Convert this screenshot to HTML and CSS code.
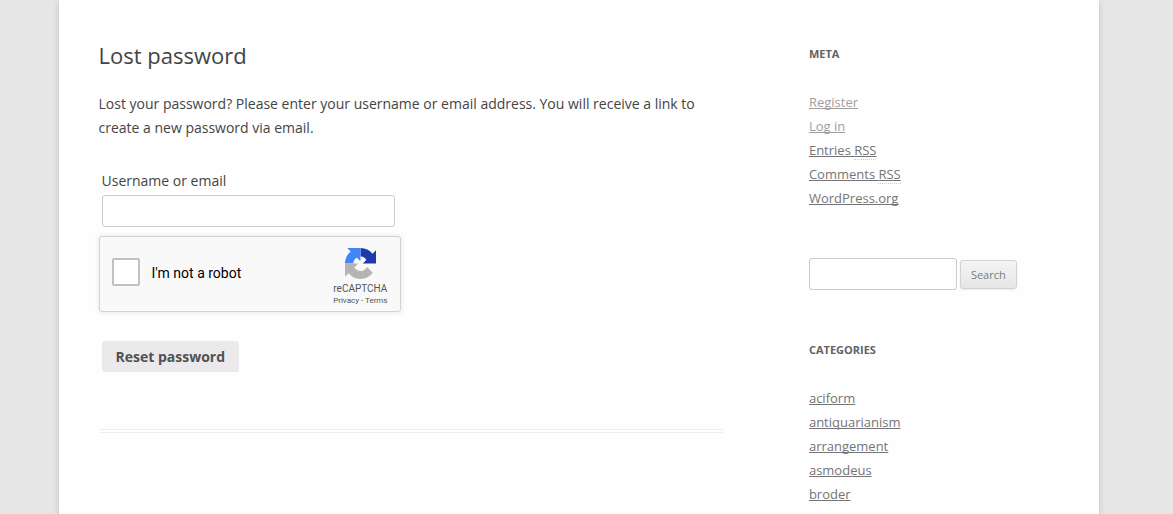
FILE: index.html
```html
<!DOCTYPE html>
<html lang="en">
<head>
<meta charset="utf-8">
<title>Lost password</title>
<link rel="stylesheet" href="styles.css">
</head>
<body>
<div class="site">
  <main class="content">
    <article class="entry">
      <h1 class="entry-title">Lost password</h1>
      <p class="intro">Lost your password? Please enter your username or email address. You will receive a link to create a new password via email.</p>
      <form class="reset-form">
        <div class="field">
          <label for="user-login">Username or email</label>
          <input class="text-input" id="user-login" type="text">
        </div>
        <div class="captcha">
          <input class="captcha-box" id="robot" type="checkbox">
          <label class="captcha-label" for="robot">I'm not a robot</label>
          <div class="captcha-brand">
            <svg class="captcha-logo" viewBox="0 0 64 64" aria-hidden="true">
              <path fill="#1c3aa9" d="M64 31.955l-.016-1.37V4.687l-7.16 7.16C50.964 4.674 42.033.093 32.05.093V17.5c1.8 0 3.7.1 5.3.9 3.2 1.4 5.2 3.5 6.6 6.3l-7.3 7.255H64"/>
              <path fill="#4285f4" d="M31.862.094l-1.37.016H4.594l7.16 7.16C4.58 13.131 0 22.061 0 32.045h17.2c.1-1.9.2-3.7 1-5.3 1.4-3.2 3.5-5.2 6.3-6.6l7.362 7.3V.094"/>
              <path fill="#b4b4b4" d="M.001 32.045l.016 1.37v25.898l7.16-7.16C13.037 59.326 21.968 63.907 31.95 63.907c10.388 0 19.617-4.96 25.45-12.64L45.669 39.408a15.54 15.54 0 0 1-4.754 5.334c-2.05 1.6-4.955 2.909-8.965 2.909-.484 0-.858-.057-1.133-.163-4.968-.392-9.275-3.134-11.811-7.114l8.304-8.304L.001 32.045"/>
            </svg>
            <span class="captcha-name">reCAPTCHA</span>
            <span class="captcha-links"><a href="#privacy">Privacy</a> - <a href="#terms">Terms</a></span>
          </div>
        </div>
        <button class="reset-button" type="submit">Reset password</button>
      </form>
    </article>
  </main>
  <aside class="sidebar">
    <section class="widget">
      <h2 class="widget-title">Meta</h2>
      <ul class="links">
        <li><a class="muted" href="#register">Register</a></li>
        <li><a class="muted" href="#login">Log in</a></li>
        <li><a href="#entries">Entries <abbr>RSS</abbr></a></li>
        <li><a href="#comments">Comments <abbr>RSS</abbr></a></li>
        <li><a href="#wordpress">WordPress.org</a></li>
      </ul>
    </section>
    <form class="widget search">
      <input class="text-input" type="text" aria-label="Search for">
      <button class="search-button" type="submit">Search</button>
    </form>
    <section class="widget">
      <h2 class="widget-title">Categories</h2>
      <ul class="links">
        <li><a href="#aciform">aciform</a></li>
        <li><a href="#antiquarianism">antiquarianism</a></li>
        <li><a href="#arrangement">arrangement</a></li>
        <li><a href="#asmodeus">asmodeus</a></li>
        <li><a href="#broder">broder</a></li>
      </ul>
    </section>
  </aside>
</div>
</body>
</html>
```
FILE: styles.css
```css
* {
  box-sizing: border-box;
}

body {
  margin: 0;
  padding: 0 16px 0 0;
  background: #e6e6e6;
  color: #444;
  font: 14px/24px "Open Sans", Helvetica, Arial, sans-serif;
}

.site {
  display: flex;
  justify-content: space-between;
  max-width: 1040px;
  min-height: 100vh;
  margin: 0 auto;
  padding: 0 40px;
  background: #fefefe;
  box-shadow: 0 2px 6px rgba(100, 100, 100, 0.3);
}

.content {
  width: 65%;
  padding-top: 42px;
}

.entry {
  padding-bottom: 57px;
  border-bottom: 4px double #ededed;
}

.entry-title {
  margin: 0 0 23px;
  font-size: 22px;
  font-weight: 400;
  line-height: 27px;
}

.intro {
  margin: 0 0 29px;
}

.field {
  display: flex;
  flex-direction: column;
  align-items: flex-start;
  gap: 2px;
  margin: 0 3px 9px;
}

.text-input {
  height: 32px;
  padding: 6px;
  border: 1px solid #ccc;
  border-radius: 3px;
  background: #fefefe;
  font: inherit;
}

.field .text-input {
  width: 293px;
  max-width: 100%;
}

.captcha {
  display: flex;
  align-items: center;
  width: 302px;
  max-width: 100%;
  height: 76px;
  padding: 0 12px;
  border: 1px solid #d3d3d3;
  border-radius: 3px;
  background: #f9f9f9;
  box-shadow: 0 0 4px 1px rgba(0, 0, 0, 0.08);
  color: #000;
  font-family: Roboto, Arial, sans-serif;
}

.captcha-box {
  appearance: none;
  width: 28px;
  height: 28px;
  margin: 0 12px 4px 0;
  border: 2px solid #c1c1c1;
  border-radius: 2px;
  background: #fff;
}

.captcha-label {
  flex: 1;
  padding-bottom: 2px;
}

.captcha-brand {
  display: flex;
  flex-direction: column;
  align-items: center;
  padding-top: 7px;
  color: #555;
}

.captcha-logo {
  width: 31px;
  height: 31px;
  margin-bottom: 4px;
}

.captcha-name {
  font-size: 10px;
  line-height: 12px;
}

.captcha-links {
  font-size: 8px;
  line-height: 12px;
}

.captcha-links a {
  color: inherit;
  text-decoration: none;
}

.reset-button {
  height: 31px;
  margin: 29px 3px 0;
  padding: 0 14px;
  border: 0;
  border-radius: 3px;
  background: #ebe9eb;
  color: #515151;
  font: 700 14px/14px "Open Sans", sans-serif;
}

.sidebar {
  width: 26%;
  padding-top: 42px;
}

.widget {
  margin: 0 0 48px;
  font-size: 13px;
}

.widget:last-child {
  margin-bottom: 0;
}

.widget-title {
  margin: 0 0 24px;
  color: #636363;
  font-size: 11px;
  line-height: 24px;
  text-transform: uppercase;
}

.links {
  margin: 0;
  padding: 0;
  list-style: none;
}

.links a {
  color: #757575;
  text-decoration-skip-ink: none;
}

.links .muted {
  color: #9f9f9f;
}

.links abbr {
  border-bottom: 1px dotted #ccc;
}

.search {
  display: flex;
  align-items: center;
  gap: 3px;
}

.search .text-input {
  width: 148px;
}

.search-button {
  height: 29px;
  padding: 0 10px;
  border: 1px solid #d2d2d2;
  border-radius: 3px;
  background: linear-gradient(#f4f4f4, #e6e6e6);
  box-shadow: 0 1px 2px rgba(64, 64, 64, 0.1);
  color: #7c7c7c;
  font: 11px/15px "Open Sans", sans-serif;
}
```
